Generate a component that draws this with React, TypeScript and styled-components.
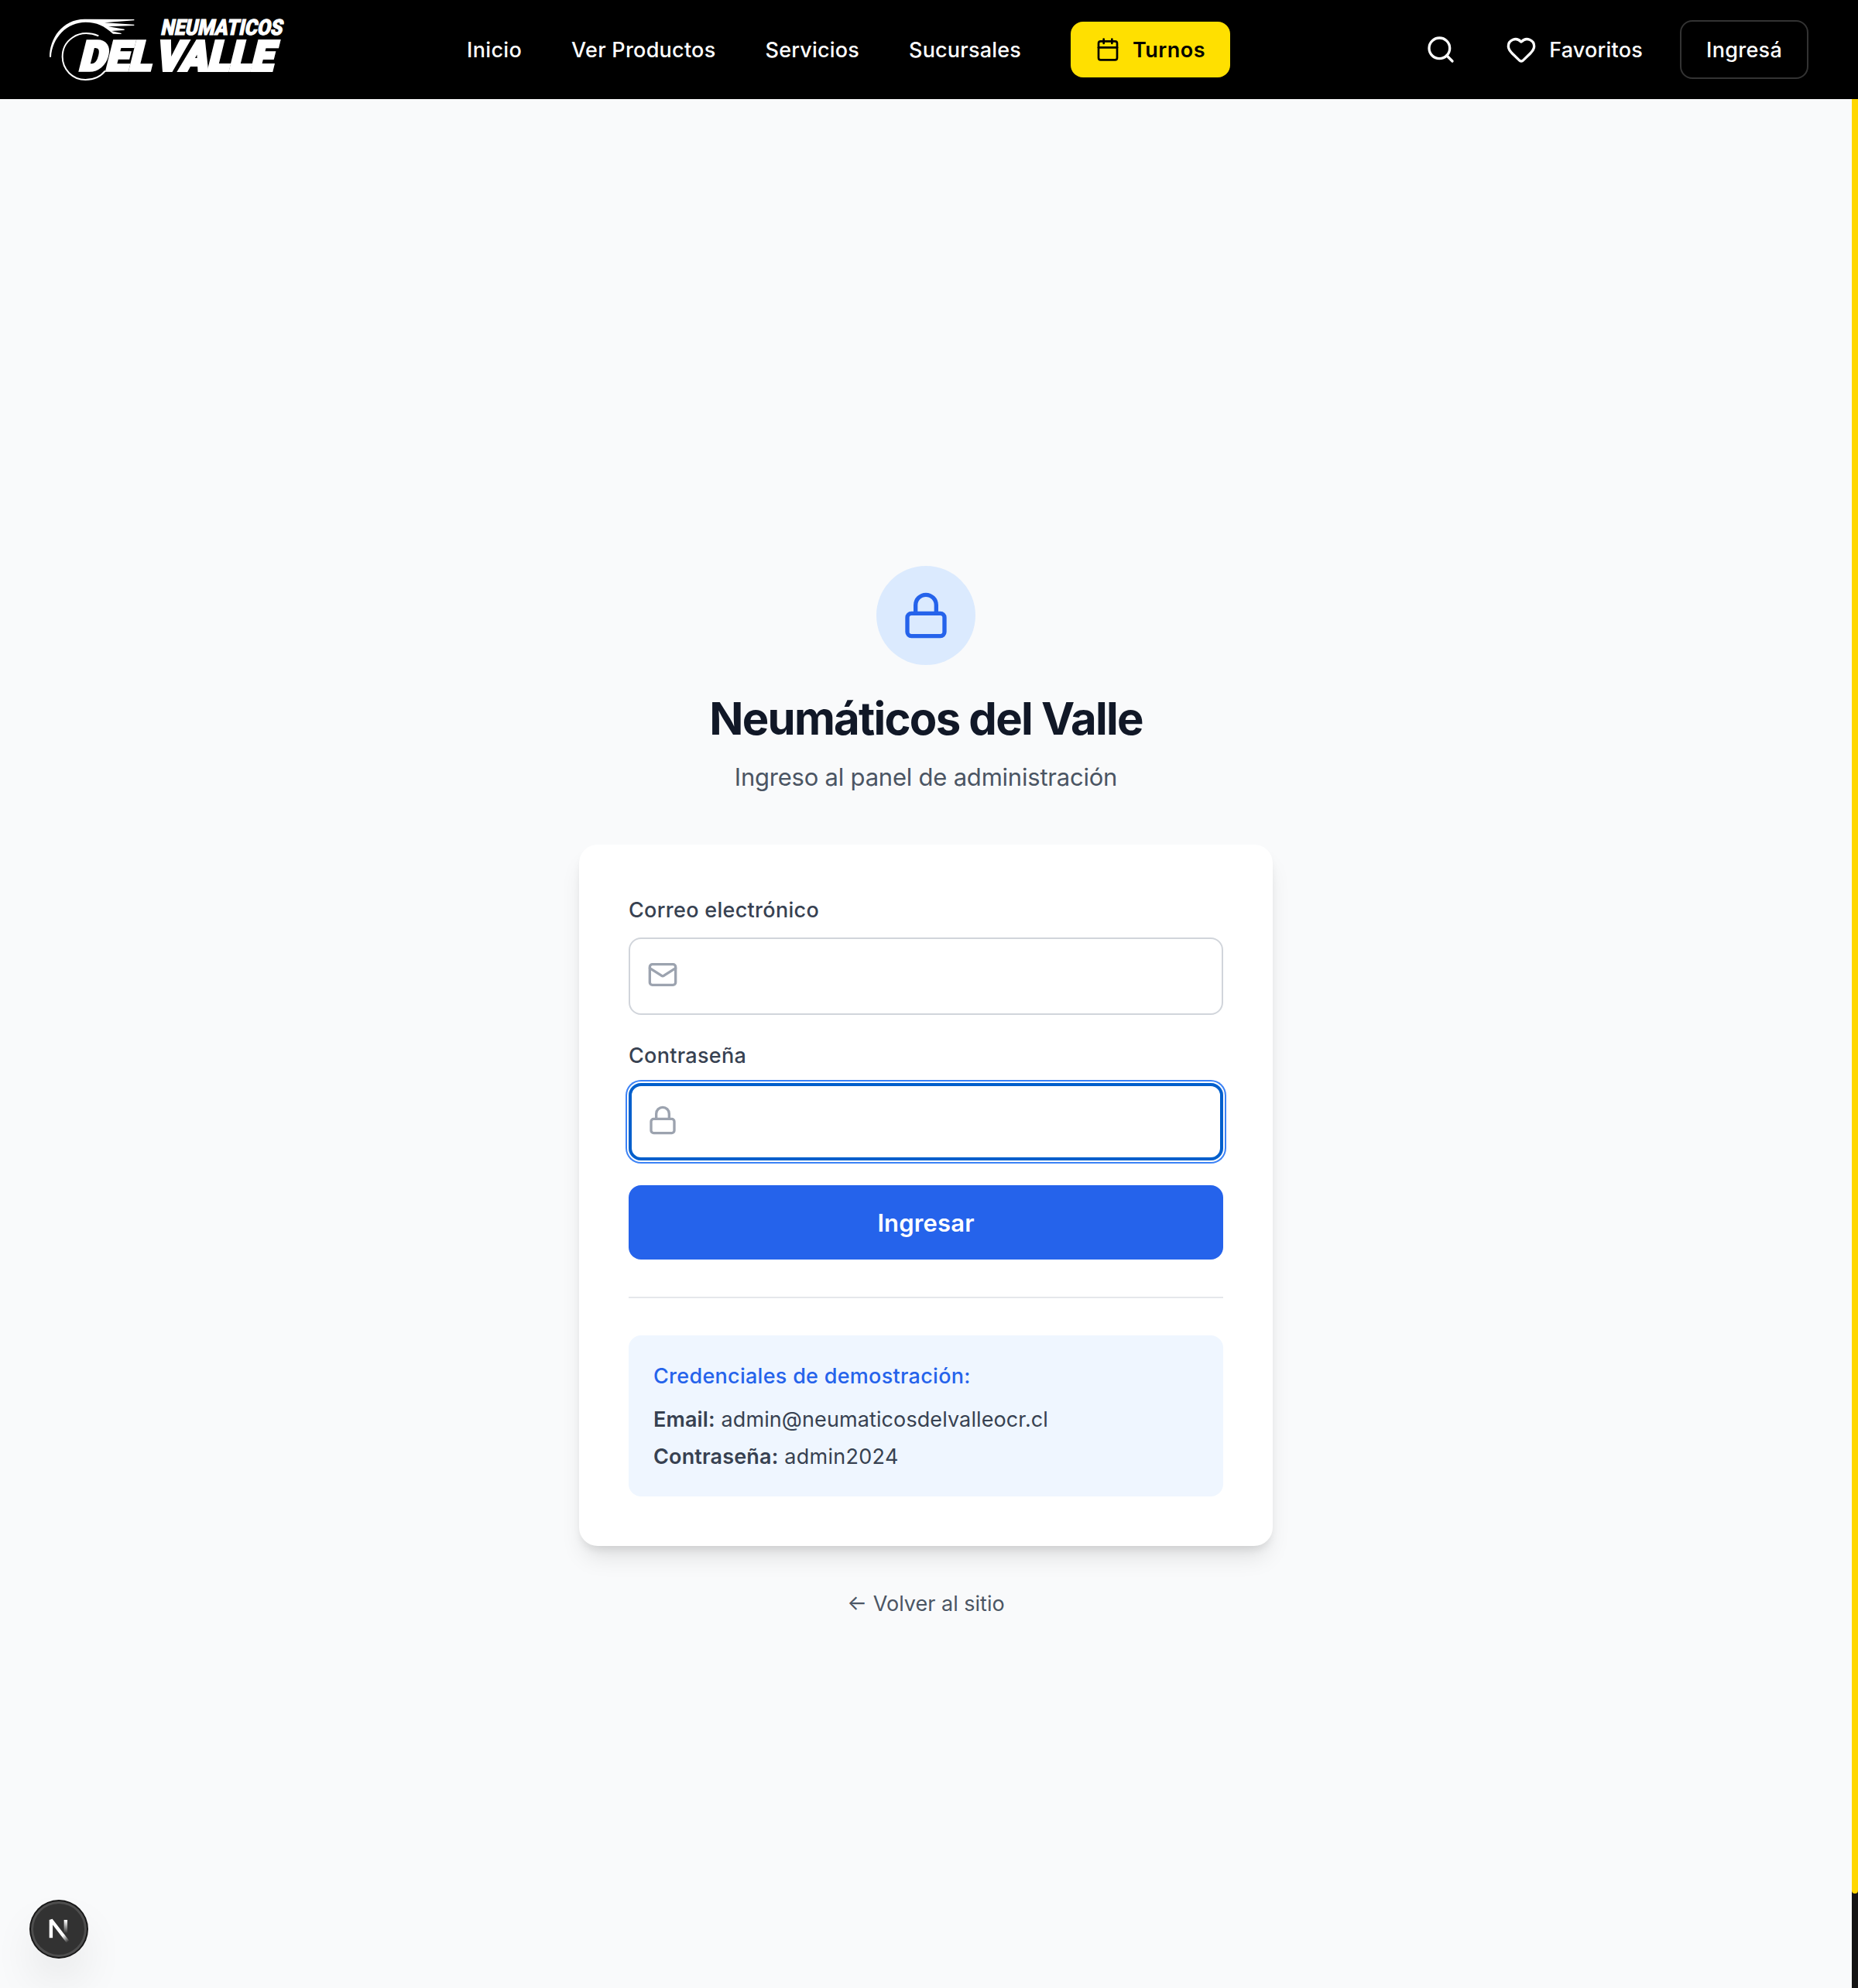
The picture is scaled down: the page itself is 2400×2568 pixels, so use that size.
import React from "react";
import styled, { createGlobalStyle } from "styled-components";
import { Calendar, Heart, Lock, Mail, Search } from "lucide-react";

const GlobalStyle = createGlobalStyle`
  *, *::before, *::after { box-sizing: border-box; }
  body {
    margin: 0;
    background: #f9fafb;
    font-family: Inter, "Liberation Sans", sans-serif;
    font-size: 27px;
    line-height: 40px;
    -webkit-font-smoothing: antialiased;
  }
  h1, p { margin: 0; }
  a { color: inherit; text-decoration: none; }
  button, input { font: inherit; }
`;

const Page = styled.div`
  height: 2568px;
  display: flex;
  flex-direction: column;
`;

const Header = styled.header`
  height: 128px;
  flex: none;
  background: #000;
  color: #fff;
  padding: 0 64px;
  display: flex;
  align-items: center;
  font-weight: 500;
`;

const LogoMark = styled.svg`
  display: block;
  width: 304px;
  height: 128px;
  overflow: visible;
`;

const LogoWord = styled.text`
  font-family: Roboto, Inter, sans-serif;
  font-weight: 900;
  fill: #fff;
  stroke: #fff;
`;

/* Text run with its own tracking; the top padding seats the baseline in the line box. */
const Tracked = styled.span<{ $track?: number }>`
  display: block;
  padding-top: 2px;
  letter-spacing: ${(p) => p.$track ?? 0}px;
  white-space: nowrap;
`;

const Nav = styled.nav`
  margin-left: 235px;
  display: flex;
  align-items: center;
  gap: 64px;
`;

const NavLink = styled.a`
  display: block;
`;

const TurnosButton = styled.a`
  height: 72px;
  padding: 0 32px;
  border-radius: 16px;
  background: #ffe000;
  color: #000;
  font-weight: 600;
  display: flex;
  align-items: center;
  gap: 16px;
`;

const Actions = styled.div`
  margin-left: auto;
  display: flex;
  align-items: center;
`;

const SearchButton = styled.button`
  margin: 0 64px 0 0;
  padding: 0;
  border: 0;
  background: none;
  color: inherit;
  display: flex;
`;

const Favorites = styled.a`
  display: flex;
  align-items: center;
  gap: 16px;
  margin-right: 48px;
`;

const LoginLink = styled.a`
  height: 76px;
  padding: 0 32px;
  border: 2px solid #333;
  border-radius: 16px;
  display: flex;
  align-items: center;
`;

const Body = styled.div`
  flex: 1;
  display: flex;
`;

const Main = styled.main`
  flex: 1;
  padding-top: 603px;
  display: flex;
  flex-direction: column;
  align-items: center;
`;

const ScrollTrack = styled.div`
  width: 8px;
  background: #141414;
`;

const ScrollThumb = styled.div`
  height: 2318px;
  background: #ffd700;
  border-radius: 0 0 4px 4px;
`;

const LockCircle = styled.div`
  width: 128px;
  height: 128px;
  border-radius: 50%;
  background: #dbeafe;
  color: #2563eb;
  display: flex;
  align-items: center;
  justify-content: center;
`;

const Title = styled.h1`
  margin-top: 33px;
  font-size: 58px;
  line-height: 72px;
  font-weight: 700;
  letter-spacing: -1.75px;
  color: #111827;
`;

const Subtitle = styled.p`
  margin-top: 16px;
  font-size: 31px;
  line-height: 48px;
  letter-spacing: -0.22px;
  color: #4b5563;
`;

const Card = styled.section`
  margin-top: 63px;
  width: 896px;
  padding: 64px;
  border-radius: 24px;
  background: #fff;
  box-shadow: 0 20px 30px -6px rgba(0, 0, 0, 0.1), 0 8px 12px -4px rgba(0, 0, 0, 0.1);
`;

const Form = styled.form`
  display: flex;
  flex-direction: column;
  gap: 32px;
`;

const Field = styled.div`
  display: flex;
  flex-direction: column;
  gap: 15px;
`;

const FieldLabel = styled.label`
  padding-top: 1px;
  font-weight: 500;
  letter-spacing: 0.3px;
  color: #374151;
`;

const InputShell = styled.div<{ $focused?: boolean }>`
  height: 100px;
  border-radius: 16px;
  border: ${(p) => (p.$focused ? "4px solid #005fcc" : "2px solid #d1d5db")};
  box-shadow: ${(p) => (p.$focused ? "0 0 0 2px #fff, 0 0 0 4px #3b82f6" : "none")};
  padding: 0 ${(p) => (p.$focused ? 20 : 22)}px 4px;
  color: #9ca3af;
  display: flex;
  align-items: center;
  gap: 12px;
`;

const Input = styled.input`
  flex: 1;
  min-width: 0;
  border: 0;
  padding: 0;
  outline: none;
  background: transparent;
`;

const SubmitButton = styled.button`
  height: 96px;
  padding: 2px 0 0;
  border: 0;
  border-radius: 16px;
  background: #2563eb;
  color: #fff;
  font-size: 31px;
  font-weight: 600;
  letter-spacing: 0.15px;
`;

const Demo = styled.div`
  margin-top: 48px;
  padding-top: 48px;
  border-top: 2px solid #e5e7eb;
`;

const DemoBox = styled.div`
  padding: 33px 32px 31px;
  border-radius: 16px;
  background: #eff6ff;
  color: #374151;
  display: flex;
  flex-direction: column;
  gap: 8px;
`;

const DemoTitle = styled.p`
  margin-bottom: 8px;
  font-weight: 500;
  letter-spacing: 0.28px;
  color: #2563eb;
`;

const DemoRow = styled.p<{ $track: number }>`
  letter-spacing: ${(p) => p.$track}px;
`;

const Strong = styled.strong`
  font-weight: 560;
  letter-spacing: 0.15px;
`;

const BackLink = styled.a`
  margin-top: 55px;
  color: #4b5563;
`;

const DevBadge = styled.div`
  position: fixed;
  left: 40px;
  bottom: 40px;
  width: 72px;
  height: 72px;
  border-radius: 50%;
  background: #323232;
  box-shadow: 0 0 0 2px #171717, inset 0 0 0 3px rgba(255, 255, 255, 0.14),
    0 32px 64px -16px rgba(0, 0, 0, 0.24);
`;

function Logo() {
  return (
    <LogoMark viewBox="72 0 912 384" aria-label="Neumáticos del Valle">
      <path
        fill="#fff"
        d="M72 221 C72 150 120 75 208 74 L400 75 L400 79 L285 88 L400 95 L400 99 L300 103 L362 113 L362 117 L312 120 L350 129 L350 132 L318 131 C285 101 255 86 212 86 C140 86 82 145 78 221 Z"
      />
      <path
        fill="none"
        stroke="#fff"
        strokeWidth="6"
        d="M262 139 C180 108 122 160 122 220 C122 270 162 309 211 309 C245 309 270 297 288 274"
      />
      <LogoWord fontSize="84" strokeWidth="3" textLength="471" lengthAdjust="spacingAndGlyphs" transform="translate(501 134) skewX(-12)">
        NEUMATICOS
      </LogoWord>
      <LogoWord fontSize="160" strokeWidth="11" textLength="281" lengthAdjust="spacingAndGlyphs" transform="translate(182 273) skewX(-14)">
        DEL
      </LogoWord>
      <LogoWord fontSize="160" strokeWidth="12" textLength="456" lengthAdjust="spacingAndGlyphs" transform="translate(479 273) skewX(-14)">
        VALLE
      </LogoWord>
    </LogoMark>
  );
}

function NextBadge() {
  return (
    <DevBadge>
      <svg width="72" height="72" viewBox="0 0 36 36" fill="none">
        <defs>
          <linearGradient id="diag" x1="9.956" y1="11.123" x2="15.478" y2="17.967" gradientUnits="userSpaceOnUse">
            <stop stopColor="#fff" />
            <stop offset="0.604" stopColor="#fff" stopOpacity="0" />
          </linearGradient>
          <linearGradient id="stem" x1="11.82" y1="1.4" x2="11.79" y2="9.625" gradientUnits="userSpaceOnUse">
            <stop stopColor="#fff" />
            <stop offset="1" stopColor="#fff" stopOpacity="0" />
          </linearGradient>
        </defs>
        <g transform="translate(10.6 11)" strokeWidth="2.2">
          <path d="M13.3 15.2 L2.34 1 V12.6" stroke="url(#diag)" strokeLinejoin="bevel" />
          <path d="M11.825 1 V13.1" stroke="url(#stem)" />
        </g>
      </svg>
    </DevBadge>
  );
}

export default function App() {
  return (
    <Page>
      <GlobalStyle />
      <Header>
        <Logo />
        <Nav>
          <NavLink href="#">
            <Tracked $track={0.33}>Inicio</Tracked>
          </NavLink>
          <NavLink href="#">
            <Tracked $track={0.26}>Ver Productos</Tracked>
          </NavLink>
          <NavLink href="#">
            <Tracked $track={0.2}>Servicios</Tracked>
          </NavLink>
          <NavLink href="#">
            <Tracked $track={0.19}>Sucursales</Tracked>
          </NavLink>
          <TurnosButton href="#">
            <Calendar size={32} />
            <Tracked $track={0.5}>Turnos</Tracked>
          </TurnosButton>
        </Nav>
        <Actions>
          <SearchButton aria-label="Buscar">
            <Search size={40} />
          </SearchButton>
          <Favorites href="#">
            <Heart size={40} />
            <Tracked $track={0.22}>Favoritos</Tracked>
          </Favorites>
          <LoginLink href="#">
            <Tracked $track={0.28}>Ingresá</Tracked>
          </LoginLink>
        </Actions>
      </Header>
      <Body>
        <Main>
          <LockCircle>
            <Lock size={64} />
          </LockCircle>
          <Title>Neumáticos del Valle</Title>
          <Subtitle>Ingreso al panel de administración</Subtitle>
          <Card>
            <Form>
              <Field>
                <FieldLabel htmlFor="email">Correo electrónico</FieldLabel>
                <InputShell>
                  <Mail size={40} />
                  <Input id="email" type="email" />
                </InputShell>
              </Field>
              <Field>
                <FieldLabel htmlFor="password">Contraseña</FieldLabel>
                <InputShell $focused>
                  <Lock size={40} />
                  <Input id="password" type="password" />
                </InputShell>
              </Field>
              <SubmitButton type="button">Ingresar</SubmitButton>
            </Form>
            <Demo>
              <DemoBox>
                <DemoTitle>Credenciales de demostración:</DemoTitle>
                <DemoRow $track={0.1}>
                  <Strong>Email:</Strong> admin@neumaticosdelvalleocr.cl
                </DemoRow>
                <DemoRow $track={0.28}>
                  <Strong>Contraseña:</Strong> admin2024
                </DemoRow>
              </DemoBox>
            </Demo>
          </Card>
          <BackLink href="#">← Volver al sitio</BackLink>
        </Main>
        <ScrollTrack>
          <ScrollThumb />
        </ScrollTrack>
      </Body>
      <NextBadge />
    </Page>
  );
}
